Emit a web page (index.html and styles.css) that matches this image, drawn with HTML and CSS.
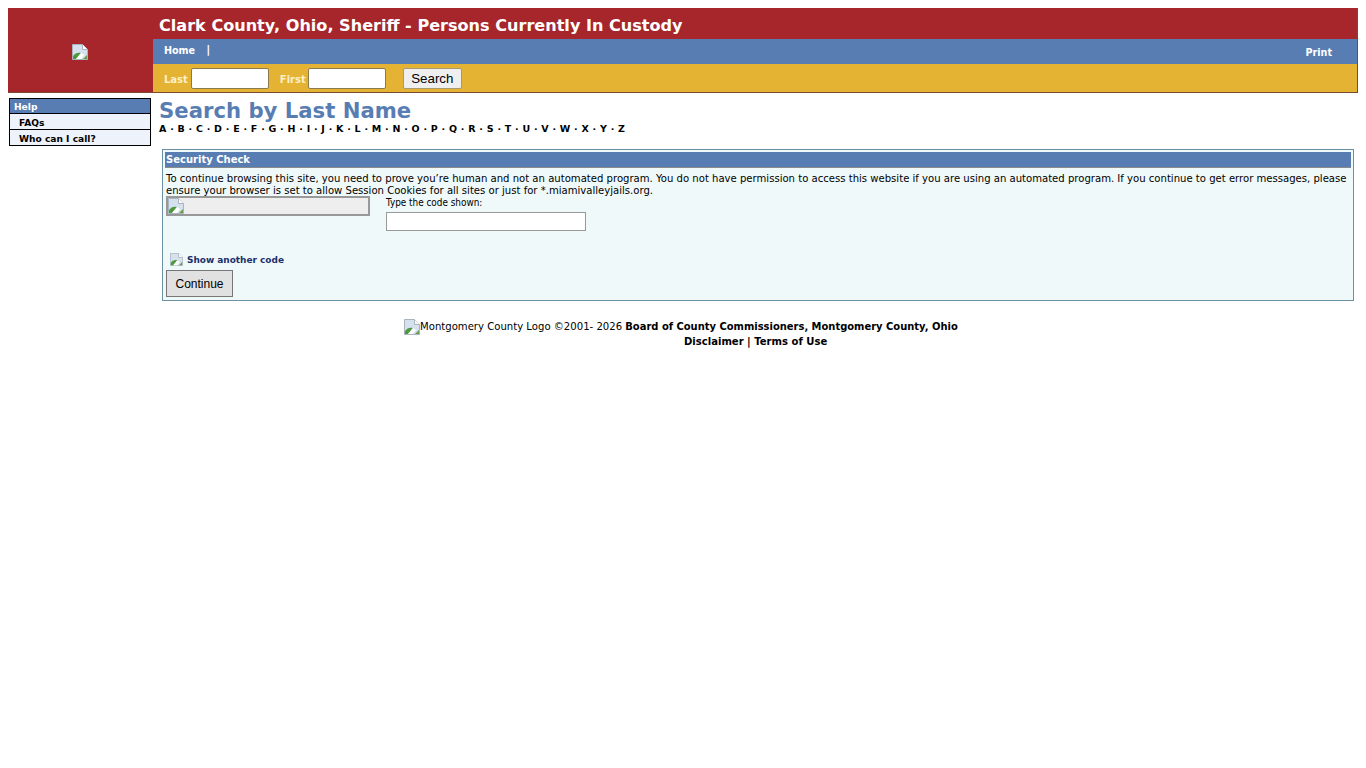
FILE: index.html
```html
<!DOCTYPE html>
<html lang="en">
<head>
<meta charset="utf-8">
<title>Clark County, Ohio, Sheriff - Persons Currently In Custody</title>
<link rel="stylesheet" href="styles.css">
</head>
<body>
<svg class="defs" width="0" height="0" aria-hidden="true">
  <symbol id="broken" viewBox="0 0 16 16">
    <path d="M0.5 0.5H10.5L15.5 5.5V15.5H0.5Z" fill="#d5e1ee" stroke="#a9b4bf"/>
    <path d="M10.5 0.5V5.5H15.5" fill="#fff" stroke="#a9b4bf"/>
    <path d="M1 15V12C3 9 6 8 9 9L4 15Z" fill="#4c9a3c"/>
    <path d="M9 9L12 11L9 15H4Z" fill="#fff"/>
    <path d="M11 15L15 11V15Z" fill="#6c9c50"/>
  </symbol>
</svg>
<header class="masthead">
  <div class="logo-cell"><svg class="icon"><use href="#broken"/></svg></div>
  <div class="head-main">
    <div class="title-bar">Clark County, Ohio, Sheriff - Persons Currently In Custody</div>
    <nav class="nav-bar">
      <div class="nav-left"><a href="#" class="nav-link">Home</a><span class="nav-sep">|</span></div>
      <a href="#" class="nav-link print-link">Print</a>
    </nav>
    <form class="search-bar">
      <label class="search-label">Last</label><input class="search-input" type="text">
      <label class="search-label first-label">First</label><input class="search-input" type="text">
      <button class="search-button" type="button">Search</button>
    </form>
  </div>
</header>
<div class="layout">
  <aside class="sidebar">
    <div class="side-head">Help</div>
    <a href="#" class="side-item">FAQs</a>
    <a href="#" class="side-item">Who can I call?</a>
  </aside>
  <main class="content">
    <h1 class="page-title">Search by Last Name</h1>
    <div class="alpha">
      <a href="#">A</a><i>·</i><a href="#">B</a><i>·</i><a href="#">C</a><i>·</i><a href="#">D</a><i>·</i><a href="#">E</a><i>·</i><a href="#">F</a><i>·</i><a href="#">G</a><i>·</i><a href="#">H</a><i>·</i><a href="#">I</a><i>·</i><a href="#">J</a><i>·</i><a href="#">K</a><i>·</i><a href="#">L</a><i>·</i><a href="#">M</a><i>·</i><a href="#">N</a><i>·</i><a href="#">O</a><i>·</i><a href="#">P</a><i>·</i><a href="#">Q</a><i>·</i><a href="#">R</a><i>·</i><a href="#">S</a><i>·</i><a href="#">T</a><i>·</i><a href="#">U</a><i>·</i><a href="#">V</a><i>·</i><a href="#">W</a><i>·</i><a href="#">X</a><i>·</i><a href="#">Y</a><i>·</i><a href="#">Z</a>
    </div>
    <section class="panel">
      <h2 class="panel-head">Security Check</h2>
      <p class="panel-text">To continue browsing this site, you need to prove you’re human and not an automated program. You do not have permission to access this website if you are using an automated program. If you continue to get error messages, please ensure your browser is set to allow Session Cookies for all sites or just for *.miamivalleyjails.org.</p>
      <div class="captcha-row">
        <div class="captcha-img"><svg class="icon"><use href="#broken"/></svg></div>
        <div class="captcha-entry">
          <label class="code-label">Type the code shown:</label>
          <input class="code-input" type="text">
        </div>
      </div>
      <a href="#" class="another"><svg class="icon-small"><use href="#broken"/></svg>Show another code</a>
      <button class="continue" type="button">Continue</button>
    </section>
    <footer class="foot">
      <div class="foot-line"><svg class="icon"><use href="#broken"/></svg><span class="foot-text">Montgomery County Logo ©2001- 2026 </span><b class="foot-bold">Board of County Commissioners, Montgomery County, Ohio</b></div>
      <div class="foot-line foot-links"><b>Disclaimer | Terms of Use</b></div>
    </footer>
  </main>
</div>
</body>
</html>
```
FILE: styles.css
```css
* { box-sizing: border-box; }
body {
  margin: 8px;
  font-family: "DejaVu Sans", Verdana, sans-serif;
  font-size: 10px;
  color: #000;
  background: #fff;
}
a { color: inherit; text-decoration: none; }
.defs { position: absolute; }
.icon { width: 16px; height: 16px; display: block; }
.icon-small { width: 13px; height: 13px; display: block; }

.masthead {
  display: flex;
  height: 85px;
  width: 1350px;
  background: #a6262c;
  border-right: 1px solid #7a4a30;
  border-bottom: 1px solid #7a4a30;
}
.logo-cell {
  width: 145px;
  display: flex;
  align-items: center;
  justify-content: center;
  padding: 4px 1px 0 0;
}
.head-main { flex: 1; display: flex; flex-direction: column; }
.title-bar {
  height: 31px;
  padding: 8px 0 0 6px;
  font-weight: bold;
  font-size: 16.08px;
  line-height: 20px;
  color: #fff;
  white-space: nowrap;
}
.nav-bar {
  height: 25px;
  background: #577db3;
  color: #fff;
  font-weight: bold;
  font-size: 9.6px;
  display: flex;
  justify-content: space-between;
  align-items: center;
  padding: 0 25px 0 11px;
}
.nav-left { display: flex; align-items: center; margin-top: -2px; }
.nav-sep { margin-left: 11px; font-size: 11px; line-height: 14px; margin-top: -2px; }
.nav-link { line-height: 24px; }
.print-link { padding-top: 2px; }
.search-bar {
  flex: 1;
  background: #e4b334;
  display: flex;
  align-items: center;
  padding-left: 11px;
  color: #fff;
}
.search-label { font-weight: bold; font-size: 10px; color: #fdf0c8; padding-top: 2px; margin-right: 3px; }
.first-label { margin-left: 11px; margin-right: 2px; }
.search-input {
  width: 78px;
  height: 21px;
  background: #fff;
  border: 1px solid #8a7a50;
  border-radius: 2px;
  padding: 0;
}
.search-button {
  margin-left: 17px;
  width: 59px;
  height: 21px;
  font-family: "Liberation Sans", Arial, sans-serif;
  font-size: 13.3px;
  padding: 0;
  background: #efefef;
  border: 1px solid #a89a70;
  border-radius: 2px;
  color: #000;
}

.layout { display: flex; margin-top: 5px; }
.sidebar {
  width: 142px;
  margin-left: 1px;
  height: 48px;
  border: 1px solid #000;
  background: #eef2fa;
  font-weight: bold;
  display: flex;
  flex-direction: column;
  font-size: 9.1px;
}
.side-head {
  height: 15px;
  background: #577db3;
  color: #fff;
  padding-left: 4px;
  line-height: 16px;
  border-bottom: 1px solid #000;
}
.side-item { height: 16px; line-height: 18px; padding-left: 9px; border-bottom: 1px solid #000; }
.side-item:last-child { height: 15px; line-height: 18px; border-bottom: 0; }

.content { flex: 1; padding-left: 8px; min-width: 0; }
.page-title {
  margin: 0;
  font-size: 21.2px;
  font-weight: bold;
  line-height: 25px;
  height: 25px;
  color: #577db3;
}
.alpha {
  font-weight: bold;
  font-size: 9.5px;
  line-height: 12px;
  white-space: nowrap;
  display: flex;
}
.alpha i { font-style: normal; width: 11.18px; text-align: center; }
.panel {
  margin: 14px 4px 0 3px;
  height: 152px;
  border: 1px solid #6b8fa3;
  background: #eff9f9;
  padding: 2px 3px;
}
.panel-head {
  margin: 0 -1px;
  padding-left: 1px;
  height: 16px;
  background: #577db3;
  color: #fff;
  font-size: 10px;
  font-weight: bold;
  line-height: 15px;
  border-bottom: 1px solid #8a8a8a;
}
.panel-text {
  margin: 5px 0 0;
  font-size: 10.09px;
  line-height: 12px;
}
.captcha-row { display: flex; gap: 16px; margin-top: -1px; }
.captcha-img {
  width: 204px;
  height: 20px;
  border: 2px solid #999;
  background: #eeeeee;
}
.captcha-entry { display: flex; flex-direction: column; }
.code-label { font-family: "DejaVu Sans Condensed", "DejaVu Sans", sans-serif; font-size: 9.9px; line-height: 14px; }
.code-input {
  margin-top: 2px;
  width: 200px;
  height: 19px;
  border: 1px solid #999;
  background: #fff;
  padding: 0;
}
.another {
  margin: 22px 0 0 4px;
  display: flex;
  align-items: center;
  gap: 4px;
  font-weight: bold;
  font-size: 8.95px;
  color: #1b2f6b;
  height: 13px;
}
.continue {
  display: block;
  margin-top: 4px;
  width: 67px;
  height: 27px;
  font-family: "Liberation Sans", Arial, sans-serif;
  font-size: 12px;
  padding: 0;
  background: #e1e1e1;
  border: 1px solid #777;
  color: #000;
}
.foot { margin-top: 18px; padding-left: 245px; font-size: 10px; }
.foot-line { display: flex; align-items: center; gap: 0; white-space: pre; height: 15px; }
.foot-text { font-size: 10.1px; }
.foot-bold { font-size: 9.95px; }
.foot-links { padding-left: 280px; font-size: 10.05px; }
```
